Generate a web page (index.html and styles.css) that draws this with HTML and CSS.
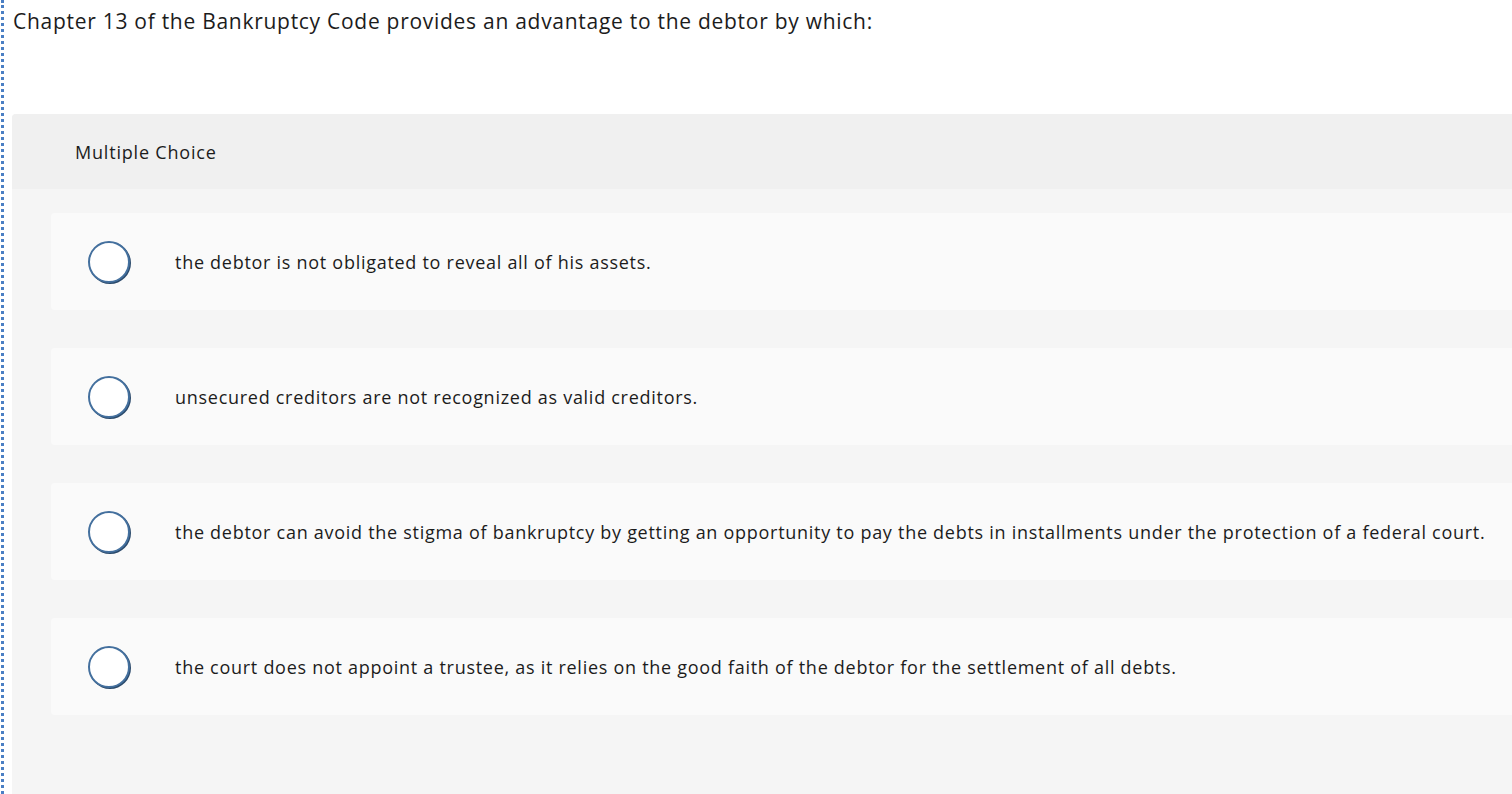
FILE: index.html
```html
<!DOCTYPE html>
<html>
<head>
<meta charset="utf-8">
<link rel="stylesheet" href="styles.css">
</head>
<body>
<div class="frame">
  <p class="question">Chapter 13 of the Bankruptcy Code provides an advantage to the debtor by which:</p>
  <div class="panel">
    <div class="panel-head">Multiple Choice</div>
    <div class="options">
      <div class="option"><span class="radio"></span><span class="label">the debtor is not obligated to reveal all of his assets.</span></div>
      <div class="option"><span class="radio"></span><span class="label">unsecured creditors are not recognized as valid creditors.</span></div>
      <div class="option"><span class="radio"></span><span class="label">the debtor can avoid the stigma of bankruptcy by getting an opportunity to pay the debts in installments under the protection of a federal court.</span></div>
      <div class="option"><span class="radio"></span><span class="label">the court does not appoint a trustee, as it relies on the good faith of the debtor for the settlement of all debts.</span></div>
    </div>
  </div>
</div>
</body>
</html>
```
FILE: styles.css
```css
html, body {
  margin: 0;
  padding: 0;
  background: #ffffff;
  overflow: hidden;
}
body {
  font-family: "Open Sans", Lato, sans-serif;
  color: #1c1c1c;
}
.frame {
  margin-left: 1px;
  border-left: 3px dotted #4a7fc4;
  height: 794px;
  box-sizing: border-box;
  padding-left: 8px;
  padding-top: 0;
}
.question {
  margin: 0;
  padding: 7px 0 0 1px;
  font-size: 21px;
  letter-spacing: 0.72px;
  line-height: 28px;
  height: 107px;
}
.panel {
  background: #f5f5f5;
  border-radius: 4px 0 0 0;
  height: 680px;
}
.panel-head {
  background: #f0f0f0;
  height: 75px;
  box-sizing: border-box;
  padding-left: 63px;
  display: flex;
  align-items: center;
  font-size: 18px;
  letter-spacing: 0.8px;
  border-radius: 4px 0 0 0;
}
.options {
  padding: 24px 0 0 39px;
  display: flex;
  flex-direction: column;
  gap: 38px;
}
.option {
  background: #fafafa;
  height: 97px;
  border-radius: 4px 0 0 4px;
  display: flex;
  align-items: center;
  padding-left: 37px;
}
.radio {
  width: 42px;
  height: 42px;
  box-sizing: border-box;
  border: 2px solid #44709e;
  border-radius: 50%;
  background: #ffffff;
  box-shadow: 1px 1px 0 #2b4a6b;
  flex: none;
}
.label {
  margin-left: 45px;
  font-size: 18px;
  letter-spacing: 0.72px;
  white-space: nowrap;
}
```
